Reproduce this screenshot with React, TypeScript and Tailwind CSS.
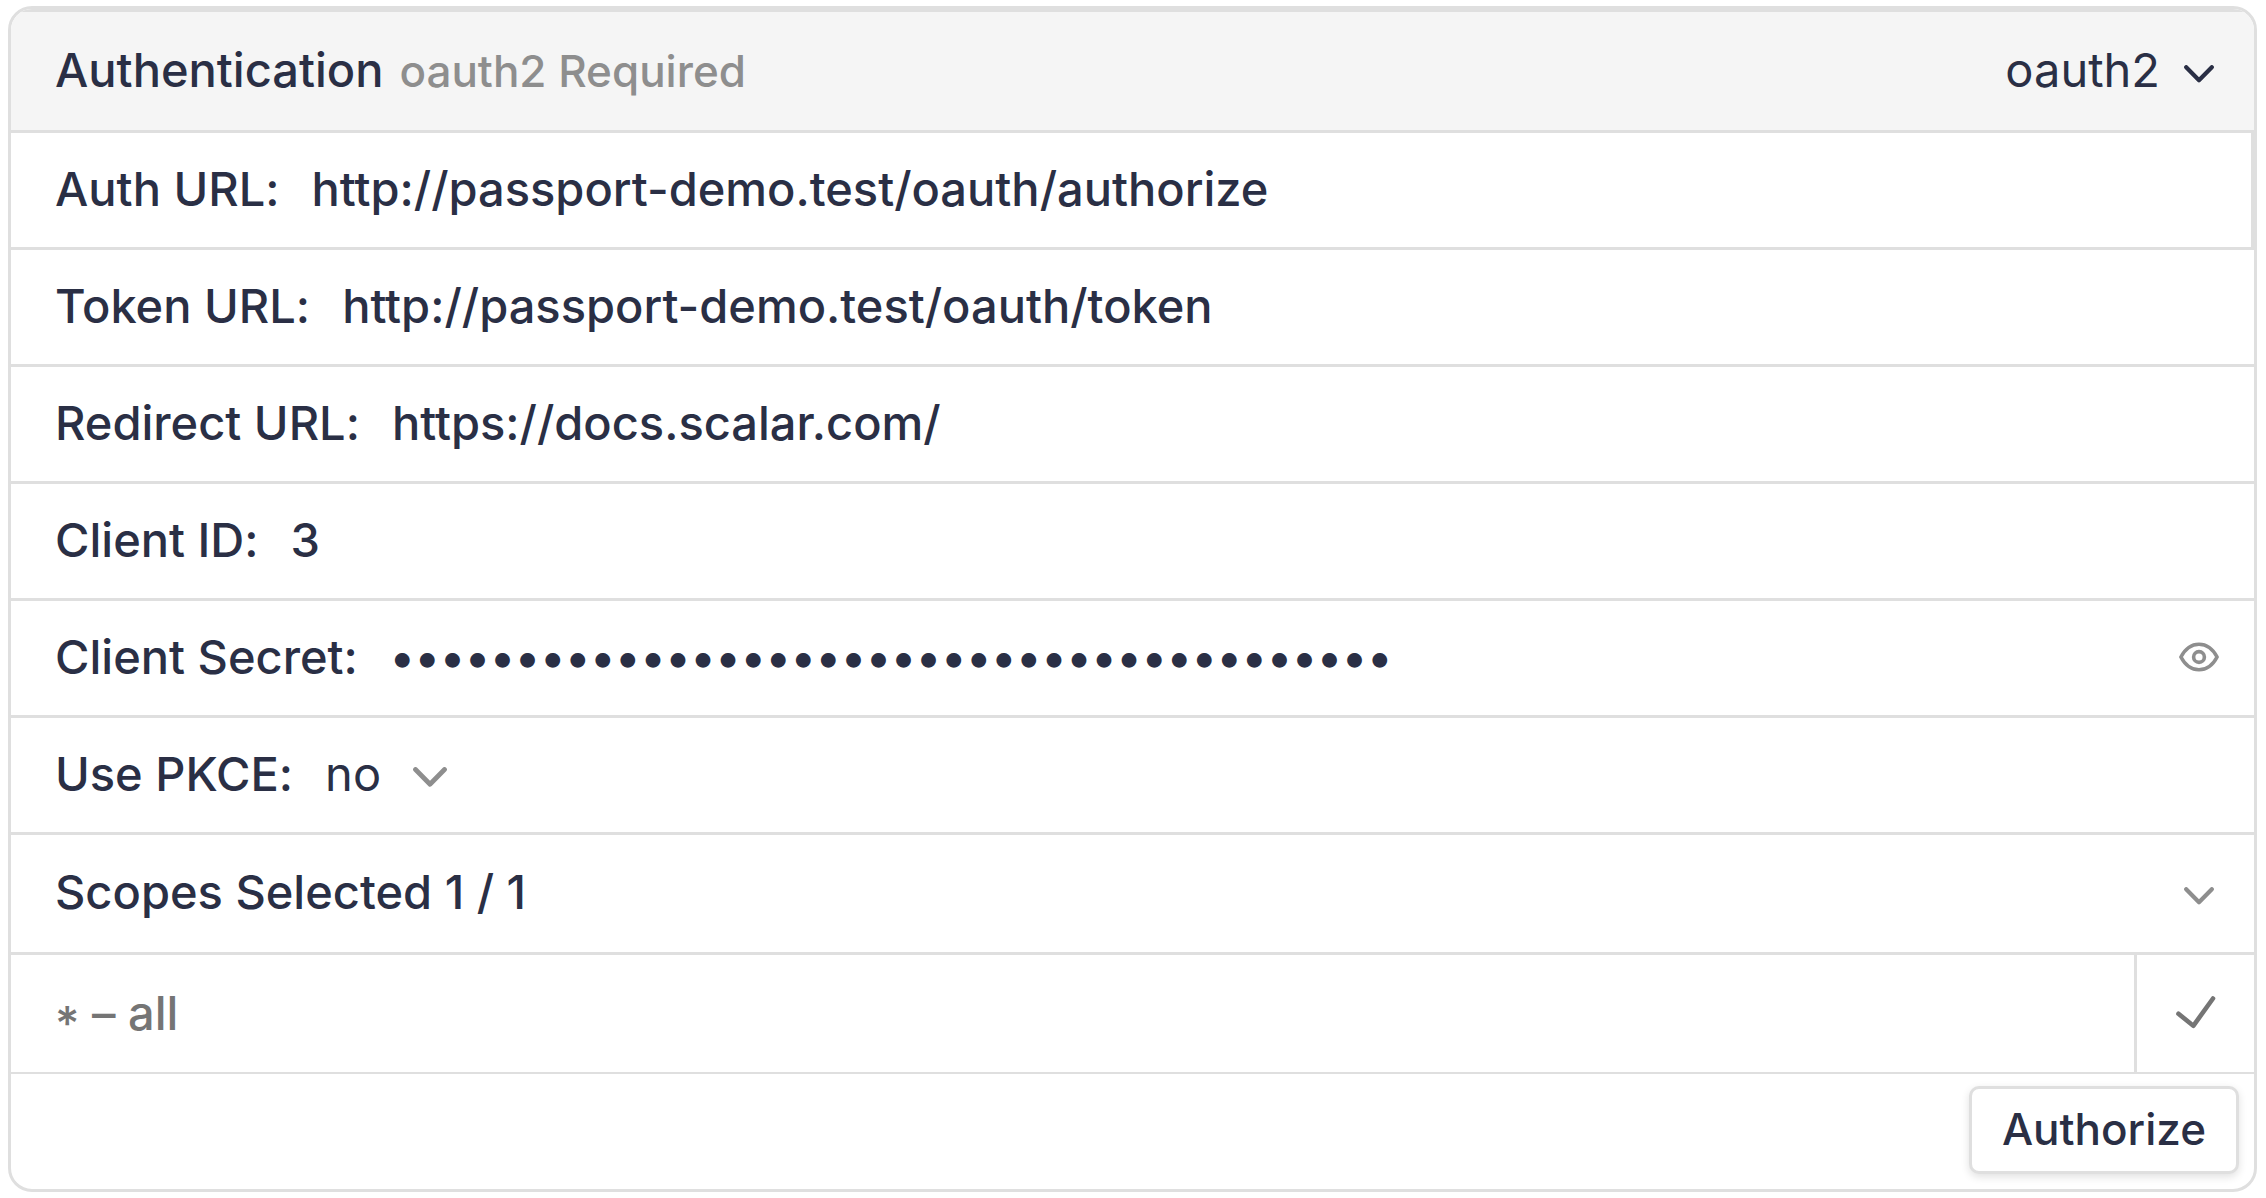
import { useState } from "react";
import type { InputHTMLAttributes, ReactNode } from "react";

interface FieldProps extends InputHTMLAttributes<HTMLInputElement> {
    id: string;
    label: string;
    children?: ReactNode;
}

function Chevron({ className }: { className: string }) {
    return (
        <svg viewBox="0 0 30 18" fill="none" stroke="currentColor" className={className} aria-hidden="true">
            <path d="M2.2 2.2 15 15.2 27.8 2.2" strokeWidth="4.2" strokeLinecap="round" strokeLinejoin="round" />
        </svg>
    );
}

function Field({ id, label, children, className = "", ...props }: FieldProps) {
    return (
        <div className={`flex h-[117px] items-center border-b-[3px] border-[#dfdfdf] pr-[35px] pb-[3px] pl-11 ${className}`}>
            <label htmlFor={id} className="shrink-0">
                {label}:
            </label>
            <input id={id} className="min-w-0 flex-1 bg-transparent px-8 outline-none" {...props} />
            {children}
        </div>
    );
}

export default function App() {
    const [scheme, setScheme] = useState("oauth2");
    const [pkce, setPkce] = useState("no");
    const [showSecret, setShowSecret] = useState(false);
    const [scopesOpen, setScopesOpen] = useState(true);
    const [allScope, setAllScope] = useState(true);

    return (
        <main className="bg-white pt-[6px] pr-[9px] pb-[6px] pl-2 font-['Inter',sans-serif] text-[47px] leading-[60px] font-medium text-[#2a2f45] [font-feature-settings:'calt'_0]">
            <form
                onSubmit={(e) => e.preventDefault()}
                className="overflow-hidden rounded-[24px] border-[3px] border-[#dfdfdf]"
            >
                {/* Header with the scheme picker */}
                <div className="flex h-[124px] items-center justify-between border-y-[3px] border-[#dfdfdf] bg-[#f5f5f5] pr-10 pb-[2px] pl-11">
                    <h2 className="flex items-baseline gap-4">
                        Authentication
                        <span className="text-[44px] text-[#8e8e8e]">oauth2 Required</span>
                    </h2>
                    <div className="flex items-center gap-6">
                        <select
                            aria-label="Security scheme"
                            value={scheme}
                            onChange={(e) => setScheme(e.target.value)}
                            className="field-sizing-content appearance-none bg-transparent font-normal outline-none"
                        >
                            <option>oauth2</option>
                        </select>
                        <Chevron className="mt-2 w-[30px]" />
                    </div>
                </div>

                <Field id="auth-url" label="Auth URL" defaultValue="http://passport-demo.test/oauth/authorize" className="border-r-[3px]" />
                <Field id="token-url" label="Token URL" defaultValue="http://passport-demo.test/oauth/token" />
                <Field id="redirect-url" label="Redirect URL" defaultValue="https://docs.scalar.com/" />
                <Field id="client-id" label="Client ID" defaultValue="3" />
                <Field
                    id="client-secret"
                    label="Client Secret"
                    type={showSecret ? "text" : "password"}
                    defaultValue="Zk3vQ9mT1xLr8bWcY5nHs2JdPf7uGa4eKo6iRtVq"
                >
                    <button type="button" aria-label="Show secret" onClick={() => setShowSecret(!showSecret)}>
                        <svg viewBox="0 0 40 30" fill="none" stroke="currentColor" strokeWidth="3.6" className="w-10 text-[#8e8e8e]">
                            <path d="M1.9 15C6 7.2 12.5 2.2 20 2.2S34 7.2 38.1 15C34 22.8 27.5 27.8 20 27.8S6 22.8 1.9 15Z" strokeLinejoin="round" />
                            <circle cx="20" cy="15" r="5.4" />
                        </svg>
                    </button>
                </Field>

                <div className="flex h-[117px] items-center border-b-[3px] border-[#dfdfdf] pb-[3px] pl-11">
                    <label htmlFor="pkce">Use PKCE:</label>
                    <select
                        id="pkce"
                        value={pkce}
                        onChange={(e) => setPkce(e.target.value)}
                        className="field-sizing-content appearance-none bg-transparent px-8 font-normal outline-none"
                    >
                        <option>no</option>
                        <option>SHA-256</option>
                        <option>plain</option>
                    </select>
                    <Chevron className="mt-2 w-[34px] text-[#8e8e8e]" />
                </div>

                <button
                    type="button"
                    aria-expanded={scopesOpen}
                    onClick={() => setScopesOpen(!scopesOpen)}
                    className="flex h-[120px] w-full items-center justify-between border-b-[3px] border-[#dfdfdf] pr-10 pb-[3px] pl-11"
                >
                    <span>Scopes Selected {allScope ? 1 : 0} / 1</span>
                    <Chevron className="mt-2 w-[30px] text-[#8e8e8e]" />
                </button>

                {scopesOpen && (
                    <label className="flex h-[119px] items-stretch border-b-2 border-[#dfdfdf] text-[#757575]">
                        <span className="flex flex-1 items-center pb-[2px] pl-11">
                            <span>
                                <span className="align-sub leading-0">*</span> – all
                            </span>
                        </span>
                        <input
                            type="checkbox"
                            checked={allScope}
                            onChange={(e) => setAllScope(e.target.checked)}
                            className="peer sr-only"
                        />
                        <span className="flex w-[120px] items-center justify-center border-l-[3px] border-[#dfdfdf] pb-[3px] text-transparent peer-checked:text-[#757575]">
                            <svg viewBox="0 0 40 33" fill="none" stroke="currentColor" className="w-10" aria-hidden="true">
                                <path d="M2.5 17.8 17.3 29.8 37 2.5" strokeWidth="4.6" strokeLinecap="round" strokeLinejoin="round" />
                            </svg>
                        </span>
                    </label>
                )}

                <div className="flex justify-end pt-3 pr-[15px] pb-[15px]">
                    <button
                        type="submit"
                        className="h-[88px] rounded-[10px] border-[3px] border-[#dfdfdf] bg-white px-[30px] pb-[2px] text-[44px] shadow-[0_3px_8px_rgba(0,0,0,0.12)]"
                    >
                        Authorize
                    </button>
                </div>
            </form>
        </main>
    );
}
